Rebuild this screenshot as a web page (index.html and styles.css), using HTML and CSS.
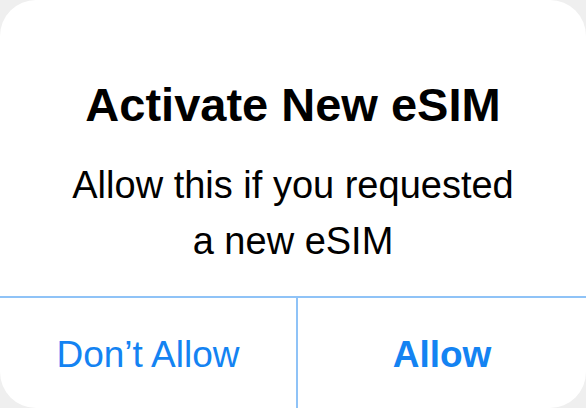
FILE: index.html
```html
<!DOCTYPE html>
<html lang="en">
<head>
  <meta charset="UTF-8">
  <title>Activate New eSIM</title>
  <link rel="stylesheet" href="styles.css">
</head>
<body>

  <div class="alert">
    <div class="alert-body">
      <h2>Activate New eSIM</h2>
      <p>Allow this if you requested<br>a new eSIM</p>
    </div>

    <div class="alert-actions">
      <button type="button">Don’t Allow</button>
      <button type="button" class="primary">Allow</button>
    </div>
  </div>

</body>
</html>
```

FILE: styles.css
```css
body {
  font-family: 'Liberation Sans', Arial, sans-serif;
  background: #efefef;
  margin: 0;
  padding: 0;
}

.alert {
  height: 408px;
  background: white;
  border-radius: 36px;
  display: flex;
  flex-direction: column;
  overflow: hidden;
}

.alert-body {
  flex: 1;
  padding-top: 77px;
  text-align: center;
  color: #000;
}

h2 {
  margin: 0;
  font-size: 47px;
  line-height: 56px;
  font-weight: bold;
}

p {
  margin: 24px 0 0;
  font-size: 38px;
  line-height: 56px;
}

.alert-actions {
  height: 110px;
  border-top: 2px solid #8fc3f7;
  display: grid;
  grid-template-columns: 296px 1fr;
}

button {
  background: none;
  border: none;
  font-family: inherit;
  font-size: 37px;
  color: #1483f2;
  cursor: pointer;
  padding: 4px 0 0;
}

button.primary {
  font-weight: bold;
  border-left: 2px solid #8fc3f7;
}
```
